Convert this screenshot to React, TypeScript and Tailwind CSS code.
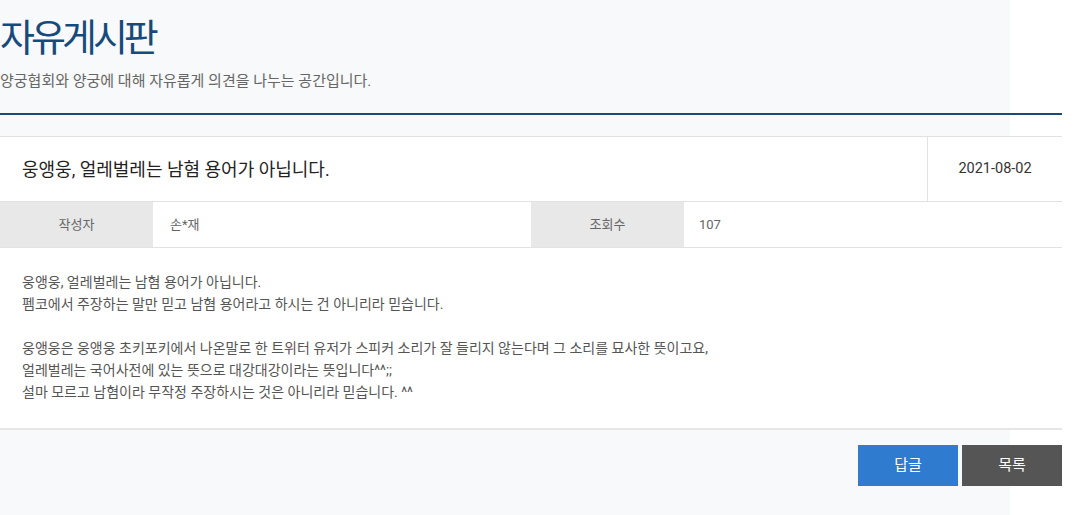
import React from 'react';

const FONT = "font-['Roboto','Noto_Sans_CJK_KR',sans-serif]";

const bodyLines = [
  '웅앵웅, 얼레벌레는 남혐 용어가 아닙니다.',
  '펨코에서 주장하는 말만 믿고 남혐 용어라고 하시는 건 아니리라 믿습니다.',
  '',
  '웅앵웅은 웅앵웅 초키포키에서 나온말로 한 트위터 유저가 스피커 소리가 잘 들리지 않는다며 그 소리를 묘사한 뜻이고요,',
  '얼레벌레는 국어사전에 있는 뜻으로 대강대강이라는 뜻입니다^^;;',
  '설마 모르고 남혐이라 무작정 주장하시는 것은 아니리라 믿습니다. ^^',
];

export default function App() {
  return (
    <div className={`min-h-screen w-[1080px] bg-[linear-gradient(to_right,#f8f9fa_1010px,#ffffff_1010px)] ${FONT}`}>
      <div className="w-[1062px]">
        {/* page heading */}
        <div className="pt-[15px] pb-[22px]">
          <h1 className="text-[38px] leading-[46px] tracking-[-4px] text-[#174a7c]">자유게시판</h1>
          <p className="mt-[10px] text-[15px] leading-[20px] text-[#666]">
            양궁협회와 양궁에 대해 자유롭게 의견을 나누는 공간입니다.
          </p>
        </div>
        <div className="h-[2px] bg-[#1c4a76]" />

        {/* post view */}
        <div className="mt-[21px] border-t border-[#e2e2e2] bg-white">
          <div className="flex h-[65px] border-b border-[#e2e2e2]">
            <div className="flex flex-1 items-center px-[22px] text-[18px] text-[#222]">
              웅앵웅, 얼레벌레는 남혐 용어가 아닙니다.
            </div>
            <div className="flex w-[135px] items-center justify-center border-l border-[#e2e2e2] text-[14.5px] text-[#333]">
              2021-08-02
            </div>
          </div>

          <div className="grid h-[46px] grid-cols-[153px_1fr_153px_1fr] border-b border-[#e2e2e2] text-[13px]">
            <div className="flex items-center justify-center bg-[#e8e8e8] text-[#666]">작성자</div>
            <div className="flex items-center px-[17px] text-[#666]">손*재</div>
            <div className="flex items-center justify-center bg-[#e8e8e8] text-[#666]">조회수</div>
            <div className="flex items-center px-[15px] text-[#666]">107</div>
          </div>

          <div className="border-b-2 border-[#e6e6e6] px-[22px] pt-[23px] pb-[25px] text-[14px] leading-[22px] text-[#555]">
            {bodyLines.map((line, i) => (
              <p key={i} className="min-h-[22px]">{line}</p>
            ))}
          </div>
        </div>

        <div className="mt-[15px] flex justify-end gap-[4px]">
          <button className="h-[41px] w-[100px] bg-[#2f7bd0] text-[15px] text-white">답글</button>
          <button className="h-[41px] w-[100px] bg-[#555555] text-[15px] text-white">목록</button>
        </div>
      </div>
    </div>
  );
}
